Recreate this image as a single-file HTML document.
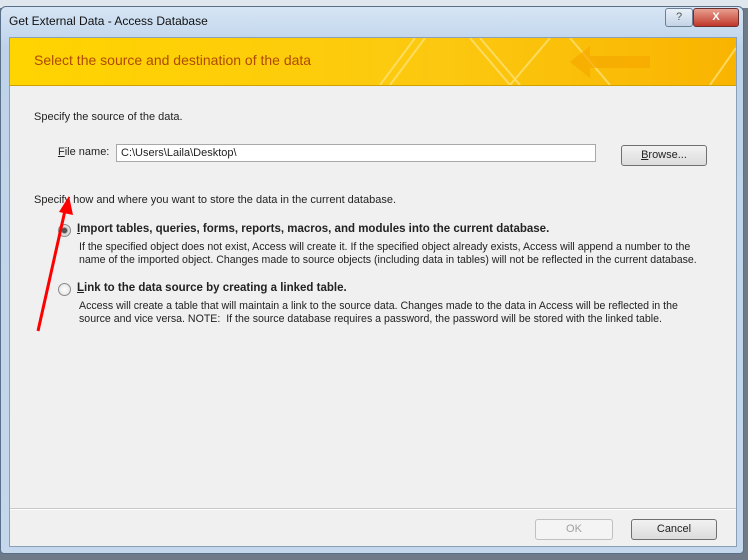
<!DOCTYPE html><html><head><style>
body{margin:0;width:748px;height:560px;overflow:hidden;background:#6e7a88;font-family:"Liberation Sans",sans-serif;font-size:11px;color:#222;position:relative}
.win{position:absolute;left:0;top:6px;width:744px;height:548px;background:linear-gradient(#d6e5f5,#bed3ea 40px,#c4d7ec);border:1px solid #5a6f88;border-radius:6px 6px 4px 4px;box-sizing:border-box}
.ab{position:absolute}
.in{position:absolute;left:8px;top:30px;width:728px;height:510px;background:#f0f0f0;border:1px solid #8aa0b8;box-sizing:border-box}
.ban{position:absolute;left:0;top:0;width:726px;height:47px;background:linear-gradient(90deg,#ffd400,#fcc810 60%,#f9b400);border-bottom:1px solid #d0a000;overflow:hidden}
.btn{position:absolute;height:19px;border:1px solid #707070;border-radius:3px;background:linear-gradient(#f2f2f2,#dcdcdc);text-align:center;line-height:19px;font-size:11px}
.rad{position:absolute;width:11px;height:11px;border:1px solid #8a8a8a;border-radius:50%;background:radial-gradient(#fff,#ddd)}
.d{position:absolute;left:69px;line-height:13px;width:636px;font-size:10.6px}
</style></head><body>
<div style="position:absolute;left:0;top:0;width:748px;height:8px;background:#dfe6ee"></div>
<div class="win">
<div class="ab" style="left:8px;top:7px;font-size:12px;color:#111">Get External Data - Access Database</div>
<div class="ab" style="left:664px;top:1px;width:26px;height:17px;border:1px solid #6d7f95;border-radius:3px;background:linear-gradient(#e8f0f8,#c4d4e6);text-align:center;color:#555;font-size:11px;line-height:17px">?</div>
<div class="ab" style="left:692px;top:1px;width:44px;height:17px;border:1px solid #6d3030;border-radius:3px;background:linear-gradient(#e8a090,#c0382a);text-align:center;color:#fff;font-weight:bold;line-height:17px">X</div>
<div class="in">
<div class="ban">
<svg width="726" height="47" style="position:absolute;left:0;top:0"><g stroke="#ffe680" stroke-width="2" fill="none" opacity=".7"><path d="M370 47L405 0M380 47L415 0M460 0L500 47M470 0L510 47M500 47L540 0M560 0L600 47M700 47L726 10"/></g><path d="M560 24L580 8V18H640V30H580V40Z" fill="#f5a800" opacity=".7"/></svg>
<div class="ab" style="left:24px;top:14px;font-size:14px;color:#b04a00">Select the source and destination of the data</div>
</div>
<div class="ab" style="left:24px;top:73px">Specify the source of the data.</div>
<div class="ab" style="left:48px;top:108px"><u>F</u>ile name:</div>
<div class="ab" style="left:106px;top:106px;width:480px;height:18px;background:#fff;border:1px solid #a8a8a8;box-sizing:border-box;padding:2px 4px">C:\Users\Laila\Desktop\</div>
<div class="btn" style="left:611px;top:107px;width:84px"><u>B</u>rowse...</div>
<div class="ab" style="left:24px;top:156px">Specify how and where you want to store the data in the current database.</div>
<div class="rad" style="left:48px;top:186px;background:radial-gradient(#555 30%,#ddd 45%)"></div>
<div class="ab" style="left:67px;top:185px;font-weight:bold;font-size:11.5px"><u>I</u>mport tables, queries, forms, reports, macros, and modules into the current database.</div>
<div class="d" style="top:203px">If the specified object does not exist, Access will create it. If the specified object already exists, Access will append a number to the name of the imported object. Changes made to source objects (including data in tables) will not be reflected in the current database.</div>
<div class="rad" style="left:48px;top:245px"></div>
<div class="ab" style="left:67px;top:244px;font-weight:bold;font-size:11.5px"><u>L</u>ink to the data source by creating a linked table.</div>
<div class="d" style="top:262px;width:610px">Access will create a table that will maintain a link to the source data. Changes made to the data in Access will be reflected in the source and vice versa. NOTE:&nbsp; If the source database requires a password, the password will be stored with the linked table.</div>
<div class="ab" style="left:0;top:470px;width:726px;border-top:1px solid #c8c8c8;border-bottom:1px solid #fff"></div>
<div class="btn" style="left:525px;top:481px;width:76px;border-color:#c0c0c0;color:#a0a0a0;background:#f4f4f4">OK</div>
<div class="btn" style="left:621px;top:481px;width:84px">Cancel</div>
</div></div>
<svg width="748" height="560" style="position:absolute;left:0;top:0"><path d="M38 331L66 206" stroke="#f00" stroke-width="3"/><path d="M59 212L69 196L73 215Z" fill="#f00"/></svg>
</body></html>
